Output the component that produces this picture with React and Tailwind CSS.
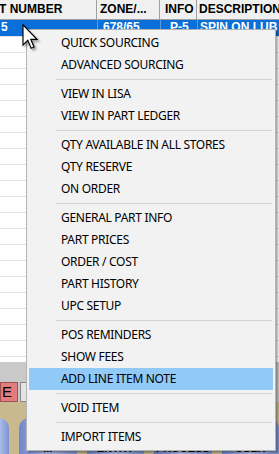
import React from "react";

const menu = [
  "QUICK SOURCING",
  "ADVANCED SOURCING",
  "-",
  "VIEW IN LISA",
  "VIEW IN PART LEDGER",
  "-",
  "QTY AVAILABLE IN ALL STORES",
  "QTY RESERVE",
  "ON ORDER",
  "-",
  "GENERAL PART INFO",
  "PART PRICES",
  "ORDER / COST",
  "PART HISTORY",
  "UPC SETUP",
  "-",
  "POS REMINDERS",
  "SHOW FEES",
  "ADD LINE ITEM NOTE",
  "-",
  "VOID ITEM",
  "-",
  "IMPORT ITEMS",
];

function Cursor() {
  return (
    <svg
      className="absolute left-[22px] top-[24px] w-[16px] h-[26px] drop-shadow-[2px_2px_1px_rgba(0,0,0,0.35)]"
      viewBox="0 0 12 20"
    >
      <path
        d="M0.6 0.6 L0.6 16.2 L4.3 12.6 L6.9 18.6 L9.1 17.7 L6.6 11.8 L11.4 11.8 Z"
        fill="#ffffff"
        stroke="#000000"
        strokeWidth="0.9"
        strokeLinejoin="miter"
      />
    </svg>
  );
}

export default function App() {
  const rows = Array.from({ length: 21 });
  return (
    <div className="relative w-[279px] h-[454px] overflow-hidden bg-white font-['Liberation_Sans',Arial,sans-serif]">
      {/* header */}
      <div className="flex h-[20px] bg-[#f0f0f0] border-b border-[#a0a0a0] text-[12px] font-bold text-black leading-[19px]">
        <div className="w-[98px] shrink-0 border-r border-[#a0a0a0] -ml-[1px] whitespace-nowrap overflow-hidden">T NUMBER</div>
        <div className="w-[63px] shrink-0 border-r border-[#a0a0a0] pl-[3px] whitespace-nowrap overflow-hidden">ZONE/...</div>
        <div className="w-[37px] shrink-0 border-r border-[#a0a0a0] pl-[5px] whitespace-nowrap overflow-hidden">INFO</div>
        <div className="flex-1 pl-[2px] whitespace-nowrap overflow-hidden">DESCRIPTION</div>
      </div>
      {/* selected row */}
      <div className="flex h-[16px] bg-[#0a6fd8] text-white text-[12px] font-bold leading-[15px]">
        <div className="w-[98px] shrink-0 border-r border-[#5a9be6] pl-[1px] whitespace-nowrap overflow-hidden">5</div>
        <div className="w-[63px] shrink-0 border-r border-[#5a9be6] pl-[5px] whitespace-nowrap overflow-hidden">678/65</div>
        <div className="w-[37px] shrink-0 border-r border-[#5a9be6] pl-[9px] whitespace-nowrap overflow-hidden">P-5</div>
        <div className="flex-1 pl-[2px] whitespace-nowrap overflow-hidden">SPIN ON LUB</div>
      </div>
      {/* white rows */}
      <div className="h-[326px] overflow-hidden">
        {rows.map((_, i) => (
          <div key={i} className="h-[16px] border-t border-[#e3e3e3]" />
        ))}
      </div>
      {/* gray band */}
      <div className="h-[20px] bg-[#c9c9c9]" />
      {/* tab row */}
      <div className="flex h-[20px] bg-[#c9c9c9] gap-[2px]">
        <div className="w-[18px] bg-[#e27d7d] border border-[#a05050] text-[15px] leading-[18px] text-black pl-[1px]">E</div>
        <div className="w-[60px] bg-[#e4e4e4] border border-[#8a8a8a]" />
      </div>
      {/* tan area with buttons */}
      <div className="flex h-[52px] bg-[#c8b98e] pt-[16px] gap-[10px]">
        <div className="-ml-[12px] w-[22px] rounded-t-[10px] bg-gradient-to-r from-[#6f86c9] via-[#b3c2ee] to-[#7d92d0]" />
        <div className="w-[60px] rounded-t-[10px] bg-gradient-to-r from-[#6f86c9] via-[#b3c2ee] to-[#7d92d0] text-[11px] font-bold text-black flex items-end justify-center leading-[12px]">...</div>
        <div className="w-[60px] rounded-t-[10px] bg-gradient-to-r from-[#6f86c9] via-[#b3c2ee] to-[#7d92d0] text-[11px] font-bold text-black flex items-end justify-center leading-[12px]">ENTRY</div>
        <div className="w-[60px] rounded-t-[10px] bg-gradient-to-r from-[#6f86c9] via-[#b3c2ee] to-[#7d92d0] text-[11px] font-bold text-black flex items-end justify-center leading-[12px]">PROCESS</div>
        <div className="w-[60px] rounded-t-[10px] bg-gradient-to-r from-[#6f86c9] via-[#b3c2ee] to-[#7d92d0] text-[11px] font-bold text-black flex items-end justify-center leading-[12px]">USER</div>
      </div>

      {/* context menu */}
      <div className="absolute left-[26px] top-[29px] w-[250px] bg-[#f2f2f2] border border-[#b4b4b4] p-[2px] shadow-[2px_2px_2px_rgba(0,0,0,0.35)] font-['Noto_Sans',sans-serif] text-[12px] tracking-[-0.3px] text-black">
        {menu.map((m, i) =>
          m === "-" ? (
            <div key={i} className="h-[7px] flex items-center pl-[27px] pr-[1px]">
              <div className="h-[1px] w-full bg-[#d4d4d4]" />
            </div>
          ) : (
            <div
              key={i}
              className={
                "h-[22px] flex items-center pl-[32px] whitespace-nowrap " +
                (m === "ADD LINE ITEM NOTE" ? "bg-[#91c9f7]" : "")
              }
            >
              {m}
            </div>
          )
        )}
      </div>

      <Cursor />
    </div>
  );
}
